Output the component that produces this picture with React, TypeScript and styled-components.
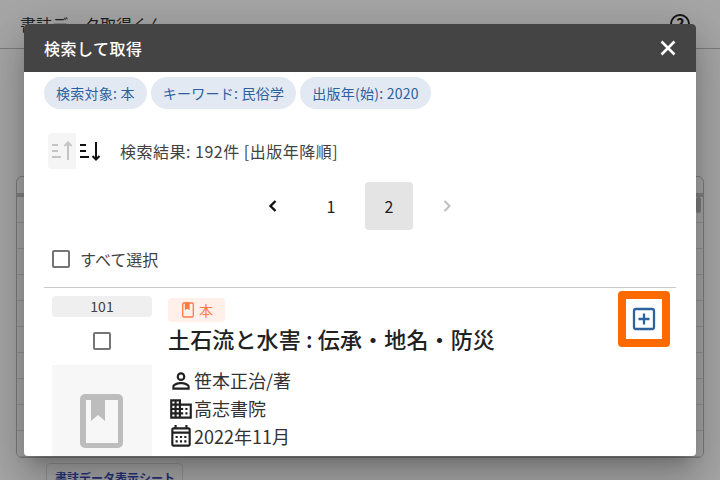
import React from "react";
import styled, { createGlobalStyle } from "styled-components";

const Global = createGlobalStyle`
  html, body { margin: 0; padding: 0; width: 720px; height: 480px; overflow: hidden; background: #fff; }
  body { font-family: "Noto Sans CJK JP", "Noto Sans", sans-serif; color: #212121; }
  * { box-sizing: border-box; }
`;

const Page = styled.div`
  position: relative;
  width: 720px;
  height: 480px;
  overflow: hidden;
  display: flex;
  flex-direction: column;
`;
const AppBar = styled.header`
  height: 49px;
  flex: none;
  padding: 0 30px 0 20px;
  border-bottom: 1px solid #b8b8b8;
  display: flex;
  align-items: center;
  justify-content: space-between;
  font-size: 16px;
`;
const HelpMark = styled.span`
  width: 20px;
  height: 20px;
  border: 2px solid #111;
  border-radius: 50%;
  display: flex;
  align-items: center;
  justify-content: center;
  font-size: 16px;
  font-weight: 700;
  color: #111;
`;
const BackBody = styled.main`
  flex: 1;
  padding: 127px 16px 0;
  display: flex;
  flex-direction: column;
`;
const Sheet = styled.div`
  position: relative;
  height: 282px;
  flex: none;
  padding-top: 16px;
  border: 1px solid #bbb;
  border-radius: 6px;
  overflow: hidden;
  display: flex;
  flex-direction: column;
`;
const SheetHeadBand = styled.div`
  flex: none;
  height: 4px;
  background: #c4c4c4;
`;
const SheetRows = styled.div`
  flex: 1;
  background: repeating-linear-gradient(#fff 0 25px, #ddd 25px 26px);
`;
const ScrollThumb = styled.div`
  position: absolute;
  top: 20px;
  right: 2px;
  width: 5px;
  height: 16px;
  border-radius: 3px;
  background: #bbb;
`;
const SheetTab = styled.div`
  margin: 5px 0 0 30px;
  width: 137px;
  height: 20px;
  padding: 5px 8px 0;
  border: 1px solid #ddd;
  border-radius: 4px 4px 0 0;
  font-size: 12px;
  line-height: 18px;
  font-weight: 700;
  color: #2a3fb0;
  white-space: nowrap;
`;
const Scrim = styled.div`
  position: absolute;
  inset: 0;
  background: rgba(33, 33, 33, 0.4);
  display: flex;
  align-items: center;
  justify-content: center;
`;
const Modal = styled.section`
  width: 672px;
  height: 432px;
  background: #fff;
  border-radius: 4px;
  overflow: hidden;
  display: flex;
  flex-direction: column;
  box-shadow: 0 11px 15px -7px rgba(0, 0, 0, 0.2), 0 24px 38px 3px rgba(0, 0, 0, 0.14), 0 9px 46px 8px rgba(0, 0, 0, 0.12);
`;
const ModalHead = styled.div`
  flex: none;
  height: 48px;
  background: #444;
  color: #fff;
  padding: 0 16px 0 20px;
  display: flex;
  align-items: center;
  justify-content: space-between;
  font-size: 16px;
  font-weight: 500;
  letter-spacing: 0.5px;
`;
const CloseButton = styled.button`
  border: 0;
  padding: 0;
  background: none;
  width: 24px;
  height: 24px;
  display: flex;
`;
const ModalBody = styled.div`
  flex: 1;
  min-height: 0;
  padding: 5px 20px 0;
  display: flex;
  flex-direction: column;
`;
const ChipRow = styled.div`
  display: flex;
  gap: 4px;
  height: 32px;
  flex: none;
`;
const Chip = styled.span`
  height: 32px;
  padding: 0 12px;
  border-radius: 16px;
  background: #e2e9f2;
  color: #2f619f;
  font-size: 14px;
  letter-spacing: 0.25px;
  line-height: 32px;
  white-space: nowrap;
`;
const SortRow = styled.div`
  flex: none;
  margin-top: 24px;
  padding-left: 4px;
  display: flex;
  align-items: center;
  height: 36px;
  font-size: 16px;
  letter-spacing: 0.5px;
  color: #424242;
`;
const SortButton = styled.span<{ $dim?: boolean }>`
  width: 28px;
  height: 36px;
  display: flex;
  align-items: center;
  justify-content: center;
  border-radius: 4px 0 0 4px;
  background: ${(p) => (p.$dim ? "#f5f5f5" : "transparent")};
  color: ${(p) => (p.$dim ? "#c4c4c4" : "#111")};
`;
const SortLabel = styled.span`
  margin-left: 16px;
`;
const Pager = styled.nav`
  flex: none;
  margin-top: 13px;
  height: 48px;
  display: flex;
  justify-content: center;
  align-items: center;
  gap: 10px;
`;
const PageCell = styled.span<{ $on?: boolean; $off?: boolean }>`
  width: 48px;
  height: 48px;
  border-radius: 4px;
  display: flex;
  align-items: center;
  justify-content: center;
  font-size: 16px;
  background: ${(p) => (p.$on ? "#e4e4e4" : "transparent")};
  color: ${(p) => (p.$off ? "#bdbdbd" : "#212121")};
`;
const SelectAll = styled.label`
  flex: none;
  margin-top: 9px;
  height: 40px;
  padding-left: 8px;
  display: flex;
  align-items: center;
  gap: 10px;
  font-size: 16px;
  color: #424242;
`;
const CheckSquare = styled.span`
  display: block;
  width: 18px;
  height: 18px;
  border: 2px solid #757575;
  border-radius: 2px;
  flex: none;
`;
const Rule = styled.hr`
  flex: none;
  width: 100%;
  margin: 8px 0 0;
  border: 0;
  border-top: 1px solid #ccc;
`;
const Item = styled.article`
  flex: 1;
  min-height: 0;
  padding: 8px 6px 0 8px;
  display: grid;
  grid-template-columns: 100px 1fr 52px;
  column-gap: 16px;
`;
const LeftCol = styled.div`
  display: flex;
  flex-direction: column;
  align-items: center;
`;
const IndexBadge = styled.div`
  width: 100px;
  height: 21px;
  border-radius: 4px;
  background: #efefef;
  color: #424242;
  text-align: center;
  font-size: 14px;
  line-height: 21px;
`;
const ItemCheck = styled.div`
  margin: 15px 0 15px;
  height: 18px;
`;
const Cover = styled.div`
  width: 100px;
  height: 100px;
  flex: none;
  background: #f7f7f7;
  padding: 29px 1px 0 0;
  display: flex;
  justify-content: center;
  align-items: flex-start;
`;
const MainCol = styled.div`
  display: flex;
  flex-direction: column;
  align-items: flex-start;
`;
const TypeTag = styled.span`
  margin-top: 2px;
  height: 24px;
  width: 57px;
  border-radius: 4px;
  background: #fff0ea;
  color: #ff7a45;
  font-size: 14px;
  line-height: 22px;
  padding-bottom: 1px;
  display: flex;
  align-items: center;
  justify-content: center;
  gap: 3px;
`;
const Title = styled.h2`
  margin: 1px 0 0;
  font-size: 22px;
  line-height: 30px;
  font-weight: 500;
  letter-spacing: 0.15px;
  color: #212121;
  white-space: nowrap;
`;
const MetaList = styled.div`
  margin-top: 13px;
  display: flex;
  flex-direction: column;
`;
const Meta = styled.div`
  height: 28px;
  display: flex;
  align-items: center;
  font-size: 18px;
  color: #333;
  white-space: nowrap;
  svg {
    flex: none;
    margin-top: 2px;
  }
`;
const AddHighlight = styled.div`
  width: 52px;
  height: 56px;
  margin-top: -5px;
  border: 8px solid #ff6a00;
  border-radius: 4px;
  background: #fff;
  display: flex;
  align-items: center;
  justify-content: center;
`;

const MDI = ({ d }: { d: string }) => (
  <svg width="26" height="26" viewBox="0 0 24 24" fill="#212121">
    <path d={d} />
  </svg>
);
const PERSON =
  "M12,4A4,4 0 0,1 16,8A4,4 0 0,1 12,12A4,4 0 0,1 8,8A4,4 0 0,1 12,4M12,6A2,2 0 0,0 10,8A2,2 0 0,0 12,10A2,2 0 0,0 14,8A2,2 0 0,0 12,6M12,13C14.67,13 20,14.33 20,17V20H4V17C4,14.33 9.33,13 12,13M12,14.9C9.03,14.9 5.9,16.36 5.9,17V18.1H18.1V17C18.1,16.36 14.97,14.9 12,14.9Z";
const DOMAIN =
  "M12 7V3H2v18h20V7H12zM6 19H4v-2h2v2zm0-4H4v-2h2v2zm0-4H4V9h2v2zm0-4H4V5h2v2zm4 12H8v-2h2v2zm0-4H8v-2h2v2zm0-4H8V9h2v2zm0-4H8V5h2v2zm10 12h-8v-2h2v-2h-2v-2h2v-2h-2V9h8v10zm-2-8h-2v2h2v-2zm0 4h-2v2h2v-2z";
const CALENDAR =
  "M7 11h2v2H7v-2m14-6v14c0 1.11-.89 2-2 2H5c-1.11 0-2-.9-2-2l.01-14c0-1.1.88-2 1.99-2h1V1h2v2h8V1h2v2h1c1.1 0 2 .9 2 2M5 7h14V5H5v2m14 12V9H5v10h14m-4-6h2v-2h-2v2m-4 0h2v-2h-2v2m-4 4h2v-2H7v2m4 0h2v-2h-2v2m4 0h2v-2h-2v2";

export default function App() {
  return (
    <Page>
      <Global />
      <AppBar>
        <span>書誌データ取得くん</span>
        <HelpMark>?</HelpMark>
      </AppBar>
      <BackBody>
        <Sheet>
          <SheetHeadBand />
          <SheetRows />
          <ScrollThumb />
        </Sheet>
        <SheetTab>書誌データ表示シート</SheetTab>
      </BackBody>
      <Scrim>
        <Modal>
          <ModalHead>
            <span>検索して取得</span>
            <CloseButton aria-label="閉じる">
              <svg width="24" height="24" viewBox="0 0 24 24" fill="none" stroke="#fff" strokeWidth="2.6">
                <path d="M5.5 5.5l13 13M18.5 5.5l-13 13" />
              </svg>
            </CloseButton>
          </ModalHead>
          <ModalBody>
            <ChipRow>
              <Chip>検索対象: 本</Chip>
              <Chip>キーワード: 民俗学</Chip>
              <Chip>出版年(始): 2020</Chip>
            </ChipRow>
            <SortRow>
              <SortButton $dim>
                <svg width="24" height="24" viewBox="0 0 24 24" fill="none" stroke="currentColor" strokeWidth="2">
                  <path d="M2 6h6M2 12h6M2 18h9M18 21V3.5M14.5 7L18 3.5 21.5 7" />
                </svg>
              </SortButton>
              <SortButton>
                <svg width="24" height="24" viewBox="0 0 24 24" fill="none" stroke="currentColor" strokeWidth="2">
                  <path d="M2 6h6M2 12h6M2 18h9M18 3v17.5M14.5 17l3.5 3.5 3.5-3.5" />
                </svg>
              </SortButton>
              <SortLabel>検索結果: 192件 [出版年降順]</SortLabel>
            </SortRow>
            <Pager>
              <PageCell>
                <svg width="20" height="20" viewBox="0 0 20 20" fill="none" stroke="#111" strokeWidth="2.4">
                  <path d="M12.5 5L7.5 10l5 5" />
                </svg>
              </PageCell>
              <PageCell>1</PageCell>
              <PageCell $on>2</PageCell>
              <PageCell $off>
                <svg width="20" height="20" viewBox="0 0 20 20" fill="none" stroke="#bdbdbd" strokeWidth="2">
                  <path d="M7.5 5l5 5-5 5" />
                </svg>
              </PageCell>
            </Pager>
            <SelectAll>
              <CheckSquare />
              すべて選択
            </SelectAll>
            <Rule />
            <Item>
              <LeftCol>
                <IndexBadge>101</IndexBadge>
                <ItemCheck>
                  <CheckSquare />
                </ItemCheck>
                <Cover>
                  <svg width="43" height="54" viewBox="0 0 43 54">
                    <path
                      fillRule="evenodd"
                      fill="#bdbdbd"
                      d="M5 0h33a5 5 0 0 1 5 5v44a5 5 0 0 1-5 5H5a5 5 0 0 1-5-5V5a5 5 0 0 1 5-5zm1 6v43h32V6H25v21l-7-6-7 6V6z"
                    />
                  </svg>
                </Cover>
              </LeftCol>
              <MainCol>
                <TypeTag>
                  <svg width="16" height="16" viewBox="0 0 16 16" fill="none" stroke="#ff7a45" strokeWidth="1.3">
                    <rect x="2.7" y="1" width="10.6" height="14" rx="1.2" />
                    <path d="M5.5 1v6l1.7-1.2L9 7V1z" fill="#ff7a45" />
                  </svg>
                  本
                </TypeTag>
                <Title>土石流と水害 : 伝承・地名・防災</Title>
                <MetaList>
                  <Meta><MDI d={PERSON} />笹本正治/著</Meta>
                  <Meta><MDI d={DOMAIN} />高志書院</Meta>
                  <Meta><MDI d={CALENDAR} />2022年11月</Meta>
                </MetaList>
              </MainCol>
              <AddHighlight>
                <svg width="24" height="24" viewBox="0 0 24 24" fill="none" stroke="#2f619f" strokeWidth="2.3">
                  <rect x="2" y="2" width="20" height="20" rx="2" />
                  <path d="M12 6.5v11M6.5 12h11" />
                </svg>
              </AddHighlight>
            </Item>
          </ModalBody>
        </Modal>
      </Scrim>
    </Page>
  );
}
